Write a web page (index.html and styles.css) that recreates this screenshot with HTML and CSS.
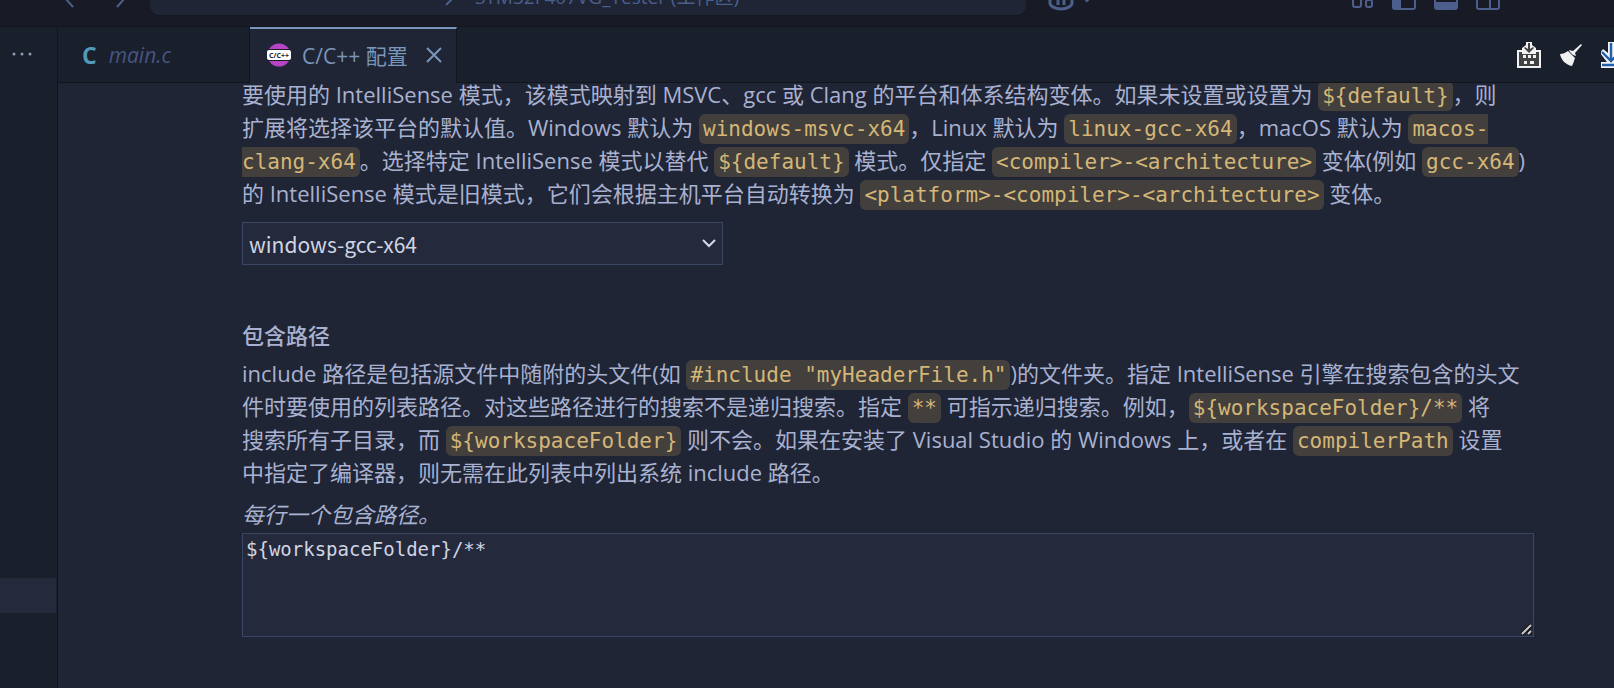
FILE: index.html
```html
<!DOCTYPE html>
<html lang="zh-CN">
<head>
    <meta charset="UTF-8">
    <meta name="viewport" content="width=device-width, initial-scale=1.0">
    <title>C/C++ 配置</title>
    <link rel="stylesheet" href="styles.css">
</head>
<body>
    <header class="titlebar">
        <nav class="history">
            <button class="icon-btn" aria-label="后退">
                <svg width="10" height="20" viewBox="0 0 10 20"><path d="M9 1L1 10l8 9"/></svg>
            </button>
            <button class="icon-btn" aria-label="前进">
                <svg width="10" height="20" viewBox="0 0 10 20"><path d="M1 1l8 9-8 9"/></svg>
            </button>
        </nav>
        <button class="command-center">
            <svg width="20" height="20" viewBox="0 0 20 20"><circle cx="12" cy="7" r="6"/><path d="M8 12l-7 7"/></svg>
            <span>STM32F407VG_Tester (工作区)</span>
        </button>
        <button class="icon-btn copilot" aria-label="Copilot">
            <svg width="28" height="24" viewBox="0 0 28 24"><path d="M3 10v6c0 3 5 6 11 6s11-3 11-6v-6" stroke-width="3"/><path d="M11 12v6M17 12v6" stroke-width="3"/></svg>
            <svg width="10" height="8" viewBox="0 0 10 8"><path d="M1 2l4 4 4-4"/></svg>
        </button>
        <div class="layout-actions">
            <button class="icon-btn" aria-label="自定义布局">
                <svg width="22" height="22" viewBox="0 0 22 22"><rect x="1" y="1" width="8" height="18" rx="2"/><rect x="14" y="1" width="6" height="6" rx="2"/><rect x="14" y="12" width="6" height="7" rx="2"/></svg>
            </button>
            <button class="icon-btn" aria-label="切换主侧栏">
                <svg width="24" height="22" viewBox="0 0 24 22"><rect x="1" y="1" width="22" height="20" rx="2"/><path class="solid" d="M1 1h8v20H1z"/></svg>
            </button>
            <button class="icon-btn" aria-label="切换面板">
                <svg width="24" height="22" viewBox="0 0 24 22"><rect x="1" y="1" width="22" height="20" rx="2"/><path class="solid" d="M1 14h22v7H1z"/></svg>
            </button>
            <button class="icon-btn" aria-label="切换辅助侧栏">
                <svg width="24" height="22" viewBox="0 0 24 22"><rect x="1" y="1" width="22" height="20" rx="2"/><path d="M14 1v20"/></svg>
            </button>
        </div>
    </header>

    <div class="workbench">
        <aside class="sidebar">
            <button class="icon-btn more" aria-label="更多操作">
                <svg width="22" height="4" viewBox="0 0 22 4"><circle cx="3" cy="2" r="1.5"/><circle cx="11" cy="2" r="1.5"/><circle cx="19" cy="2" r="1.5"/></svg>
            </button>
            <div class="selected-row"></div>
        </aside>

        <main class="editor">
            <div class="tabs">
                <a class="tab preview" href="#main">
                    <span class="c-icon">C</span>
                    <span>main.c</span>
                </a>
                <div class="tab active">
                    <svg class="cpp-icon" width="24" height="24" viewBox="0 0 24 24">
                        <circle cx="12" cy="12" r="11.5" fill="#b545c4"/>
                        <rect x="0" y="6" width="24" height="12" rx="2" fill="#1b1b22"/>
                        <rect x="0" y="7" width="24" height="10" rx="2" fill="#fff"/>
                        <text x="12" y="15" text-anchor="middle">C/C++</text>
                    </svg>
                    <span>C/C++ 配置</span>
                    <button class="icon-btn close" aria-label="关闭">
                        <svg width="16" height="16" viewBox="0 0 16 16"><path d="M1 1l14 14M15 1L1 15"/></svg>
                    </button>
                </div>
                <div class="tab-actions">
                    <button class="icon-btn" aria-label="生成">
                        <svg width="24" height="26" viewBox="0 0 24 26">
                            <path d="M0 8h5V6l4-3V0h6v3l4 3v2h5v18H0z" fill="#f2f2f2"/>
                            <path d="M2 10h3v7h14v-7h3v14H2z" fill="#424242"/>
                            <path d="M11 1h2v6l3-2 1 1-5 5-5-5 1-1 3 2z" fill="#424242"/>
                            <path d="M5 12h14v5H5z" fill="#424242"/>
                            <path d="M6 13h3v3H6zM11 13h3v3h-3zM16 13h3v3h-3zM7 19h3v3H7zM13 19h4v3h-4z" fill="#f2f2f2"/>
                        </svg>
                    </button>
                    <button class="icon-btn" aria-label="清理">
                        <svg width="24" height="24" viewBox="0 0 24 24"><path d="M22 1l1 1-7 8 1 3-3-1-3-3-1-2 4 1z" fill="#f0f0f0"/><path d="M9 8l7 7c-1 3-2 6-3 8C7 22 2 17 1 11c3 0 5-1 8-3z" fill="#f0f0f0"/></svg>
                    </button>
                    <button class="icon-btn" aria-label="下载">
                        <svg width="26" height="26" viewBox="0 0 26 26"><path d="M7 0h6v11l6-4 3 4-8 9h9v6H0v-6h6L-1 11l3-4 5 4z" fill="#f2f2f2"/><path d="M10 1v17M1 10l9 9 9-9M1 23h24" stroke="#1f5fae" stroke-width="2.4"/></svg>
                    </button>
                </div>
            </div>

            <form class="settings">
                <p class="mode-help">要使用的 IntelliSense 模式，该模式映射到 MSVC、gcc 或 Clang 的平台和体系结构变体。如果未设置或设置为 <code>${default}</code>，则<br>扩展将选择该平台的默认值。Windows 默认为 <code>windows-msvc-x64</code>，Linux 默认为 <code>linux-gcc-x64</code>，macOS 默认为 <code>macos-<br>clang-x64</code>。选择特定 IntelliSense 模式以替代 <code>${default}</code> 模式。仅指定 <code>&lt;compiler&gt;-&lt;architecture&gt;</code> 变体(例如 <code>gcc-x64</code>)<br>的 IntelliSense 模式是旧模式，它们会根据主机平台自动转换为 <code>&lt;platform&gt;-&lt;compiler&gt;-&lt;architecture&gt;</code> 变体。</p>
                <select class="mode" aria-label="IntelliSense 模式">
                    <option>windows-gcc-x64</option>
                </select>

                <label class="heading" for="includePath">包含路径</label>
                <p>include 路径是包括源文件中随附的头文件(如 <code>#include "myHeaderFile.h"</code>)的文件夹。指定 IntelliSense 引擎在搜索包含的头文<br>件时要使用的列表路径。对这些路径进行的搜索不是递归搜索。指定 <code>**</code> 可指示递归搜索。例如，<code>${workspaceFolder}/**</code> 将<br>搜索所有子目录，而 <code>${workspaceFolder}</code> 则不会。如果在安装了 Visual Studio 的 Windows 上，或者在 <code>compilerPath</code> 设置<br>中指定了编译器，则无需在此列表中列出系统 include 路径。</p>
                <p class="hint">每行一个包含路径。</p>
                <textarea id="includePath" spellcheck="false">${workspaceFolder}/**</textarea>
            </form>
        </main>
    </div>
</body>
</html>
```

FILE: styles.css
```css
* {
    box-sizing: border-box;
}
body {
    margin: 0;
    height: 100vh;
    display: flex;
    flex-direction: column;
    overflow: hidden;
    background: #1f2534;
    color: #a9b1d1;
    font-family: "Open Sans", "Noto Sans CJK SC", sans-serif;
    font-size: 22px;
}
svg {
    display: block;
    fill: none;
    stroke: currentColor;
    stroke-width: 2;
}
.icon-btn {
    padding: 0;
    border: none;
    background: none;
    color: inherit;
}

.titlebar {
    height: 27px;
    flex: none;
    display: flex;
    align-items: flex-end;
    padding: 0 114px 0 64px;
    border-bottom: 1px solid #11151c;
    background: #181b25;
    color: #4c5f8c;
}
.history {
    display: flex;
    gap: 42px;
    margin-right: 23px;
    padding-bottom: 18px;
}
.command-center {
    flex: 0 1 878px;
    height: 40px;
    display: flex;
    align-items: center;
    justify-content: center;
    gap: 10px;
    margin-bottom: 10px;
    padding: 0 0 0 8px;
    border: 1px solid #141820;
    border-radius: 10px;
    background: #1f2534;
    color: inherit;
    font: inherit;
    font-size: 19px;
}
.copilot {
    display: flex;
    align-items: center;
    gap: 7px;
    margin-left: 20px;
    padding-bottom: 15px;
}
.layout-actions {
    display: flex;
    align-items: flex-end;
    gap: 18px;
    margin-left: auto;
    padding-bottom: 16px;
}
.layout-actions .solid {
    fill: currentColor;
    stroke: none;
}

.workbench {
    flex: 1;
    min-height: 0;
    display: flex;
}
.sidebar {
    width: 58px;
    flex: none;
    display: flex;
    flex-direction: column;
    justify-content: space-between;
    padding: 25px 1px 75px 0;
    border-right: 1px solid #11151c;
    background: #1a1f2c;
}
.more {
    padding-left: 11px;
    color: #8d99b5;
}
.more svg {
    fill: currentColor;
    stroke: none;
}
.selected-row {
    height: 35px;
    background: #24293b;
}

.editor {
    flex: 1;
    min-width: 0;
    display: flex;
    flex-direction: column;
}
.tabs {
    height: 56px;
    flex: none;
    display: flex;
    background: #1a1f2c;
    box-shadow: inset 0 -1px #11151c;
}
.tab {
    display: flex;
    align-items: center;
    border-right: 1px solid #11151c;
    color: #455583;
    font-size: 21px;
    text-decoration: none;
}
.preview {
    width: 192px;
    gap: 12px;
    padding-left: 24px;
    font-style: italic;
}
.c-icon {
    color: #519aba;
    font-size: 23px;
    font-weight: bold;
    font-style: normal;
}
.active {
    gap: 11px;
    padding: 0 14px 3px 17px;
    border-top: 2px solid #7a96ba;
    background: #1f2534;
    color: #7a96ba;
}
.cpp-icon {
    stroke: none;
}
.cpp-icon text {
    fill: #1b1b22;
    font-size: 7px;
    font-weight: bold;
}
.close {
    margin-left: 7px;
}
.tab-actions {
    display: flex;
    align-items: center;
    gap: 18px;
    margin-left: auto;
    margin-right: -13px;
}
.tab-actions svg {
    stroke: none;
}

.settings {
    flex: 1;
    min-height: 0;
    display: flex;
    flex-direction: column;
    overflow: hidden;
    padding: 0 80px 0 184px;
}
p {
    margin: 0;
    line-height: 33px;
}
/* first paragraph sits slightly under the tab bar */
.mode-help {
    margin-top: -5px;
}
code {
    padding: 3px 4px;
    border-radius: 6px;
    background: #433f3c;
    color: #d4b778;
    font-family: "DejaVu Sans Mono", monospace;
    font-size: 21px;
    line-height: 1;
}
.mode {
    width: 481px;
    height: 43px;
    margin: 12px 0 54px;
    padding: 0 6px;
    appearance: none;
    border: 1px solid #3b4565;
    background: #24293b url("data:image/svg+xml,%3Csvg xmlns='http://www.w3.org/2000/svg' width='14' height='9'%3E%3Cpath d='M1 1l6 6 6-6' fill='none' stroke='%23d5daea' stroke-width='2'/%3E%3C/svg%3E") no-repeat right 6px center;
    color: #d0d5e3;
    font-family: "Noto Sans CJK SC", sans-serif;
    font-size: 21px;
}
.heading {
    margin-bottom: 5px;
    font-weight: 500;
    line-height: 33px;
}
.hint {
    margin: 9px 0 2px;
    font-style: italic;
}
textarea {
    height: 104px;
    padding: 4px 3px;
    border: 1px solid #3b4565;
    background: #24293b;
    color: #d0d5e3;
    font-family: "DejaVu Sans Mono", monospace;
    font-size: 19px;
}
textarea::-webkit-resizer {
    background: url("data:image/svg+xml,%3Csvg xmlns='http://www.w3.org/2000/svg' width='15' height='15'%3E%3Cpath d='M4 13l9-9M10 13l3-3' stroke='%23111' stroke-width='4'/%3E%3Cpath d='M4 13l9-9M10 13l3-3' stroke='%23ccc' stroke-width='2'/%3E%3C/svg%3E") no-repeat right bottom;
}
```
